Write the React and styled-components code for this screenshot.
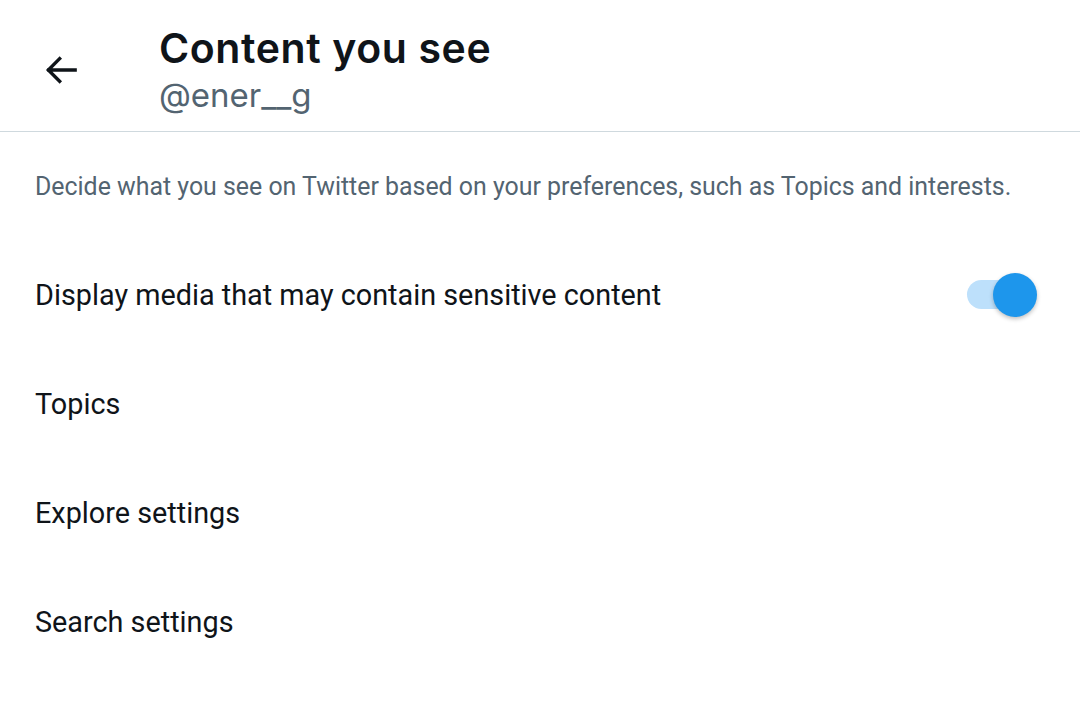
import React from 'react'
import styled, { createGlobalStyle } from 'styled-components'

const GlobalStyle = createGlobalStyle`
   html, body {
      margin: 0;
      padding: 0;
      background: #ffffff;
   }
   body {
      font-family: Roboto, 'Noto Sans', sans-serif;
      color: #0f1419;
   }
`

const rows = ['Topics', 'Explore settings', 'Search settings']

const App = () => {
   return (
      <>
         <GlobalStyle />
         <Page>
            <Header>
               <BackButton aria-label="Back">
                  <svg width="40" height="40" viewBox="0 0 24 24" fill="none">
                     <path
                        d="M20.5 12H4.6M11.2 5.2L4.4 12l6.8 6.8"
                        stroke="#0f1419"
                        strokeWidth="2"
                        strokeLinecap="square"
                     />
                  </svg>
               </BackButton>
               <TitleBlock>
                  <Title>Content you see</Title>
                  <Handle>@ener__g</Handle>
               </TitleBlock>
            </Header>
            <Description>
               Decide what you see on Twitter based on your preferences, such as Topics and interests.
            </Description>
            <List>
               <Row>
                  <RowLabel>Display media that may contain sensitive content</RowLabel>
                  <Toggle $on>
                     <Knob $on />
                  </Toggle>
               </Row>
               {rows.map((r) => (
                  <Row key={r}>
                     <RowLabel>{r}</RowLabel>
                  </Row>
               ))}
            </List>
         </Page>
      </>
   )
}

export default App

const Page = styled.div`
   width: 1080px;
   height: 706px;
   overflow: hidden;
   background: #ffffff;
`

const Header = styled.header`
   display: flex;
   align-items: center;
   box-sizing: border-box;
   height: 132px;
   border-bottom: 1px solid #cfd9de;
`

const BackButton = styled.div`
   display: flex;
   align-items: center;
   justify-content: center;
   width: 40px;
   height: 40px;
   margin-left: 41px;
   margin-right: 78px;
   margin-top: 8px;
`

const TitleBlock = styled.div`
   display: flex;
   flex-direction: column;
   margin-top: 10px;
`

const Title = styled.h1`
   margin: 0;
   font-family: Inter, 'Noto Sans', sans-serif;
   font-weight: 600;
   font-size: 41px;
   line-height: 48px;
   color: #0f1419;
   letter-spacing: 0.6px;
`

const Handle = styled.div`
   font-family: Inter, 'Noto Sans', sans-serif;
   font-weight: 400;
   font-size: 33px;
   line-height: 46px;
   color: #536471;
`

const Description = styled.p`
   margin: 0;
   height: 108px;
   display: flex;
   align-items: center;
   padding: 0 35px;
   font-family: Roboto, sans-serif;
   font-size: 24.9px;
   color: #536471;
`

const List = styled.div`
   display: flex;
   flex-direction: column;
`

const Row = styled.div`
   display: flex;
   align-items: center;
   justify-content: space-between;
   height: 109px;
   padding: 0 51px 0 35px;
`

const RowLabel = styled.span`
   font-family: Roboto, sans-serif;
   font-size: 28.8px;
   color: #0f1419;
`

const Toggle = styled.div`
   position: relative;
   width: 62px;
   height: 29px;
   border-radius: 15px;
   background: ${(p) => (p.$on ? '#bde0fb' : '#cfd9de')};
`

const Knob = styled.div`
   position: absolute;
   top: 50%;
   left: ${(p) => (p.$on ? '26px' : '-8px')};
   width: 44px;
   height: 44px;
   margin-top: -22px;
   border-radius: 50%;
   background: ${(p) => (p.$on ? '#1d96ec' : '#ffffff')};
   box-shadow: 0 2px 4px rgba(0, 0, 0, 0.25);
`
